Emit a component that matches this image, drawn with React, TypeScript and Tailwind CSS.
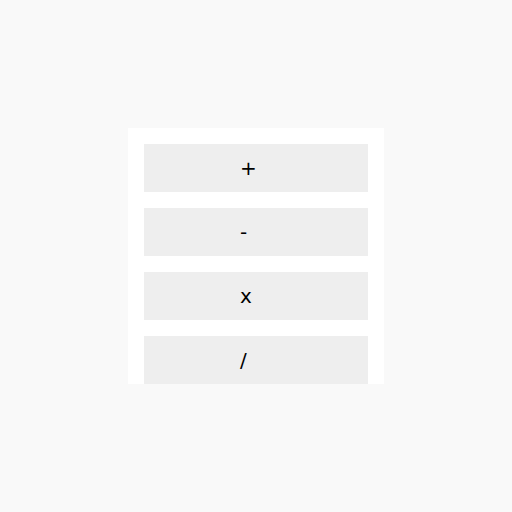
import React from 'react';

const ops = ['+', '-', 'x', '/'];

export default function App() {
  return (
    <div className="w-[512px] h-[512px] bg-[#f9f9f9] flex items-center justify-center">
      <div className="w-[256px] h-[256px] bg-white px-4 pt-4 flex flex-col gap-4 overflow-hidden">
        {ops.map((op) => (
          <button
            key={op}
            className="h-12 w-full shrink-0 bg-[#eeeeee] text-black text-left pl-[96px] text-[20px] leading-none"
            style={{ fontFamily: '"DejaVu Sans", sans-serif' }}
          >
            {op}
          </button>
        ))}
      </div>
    </div>
  );
}
